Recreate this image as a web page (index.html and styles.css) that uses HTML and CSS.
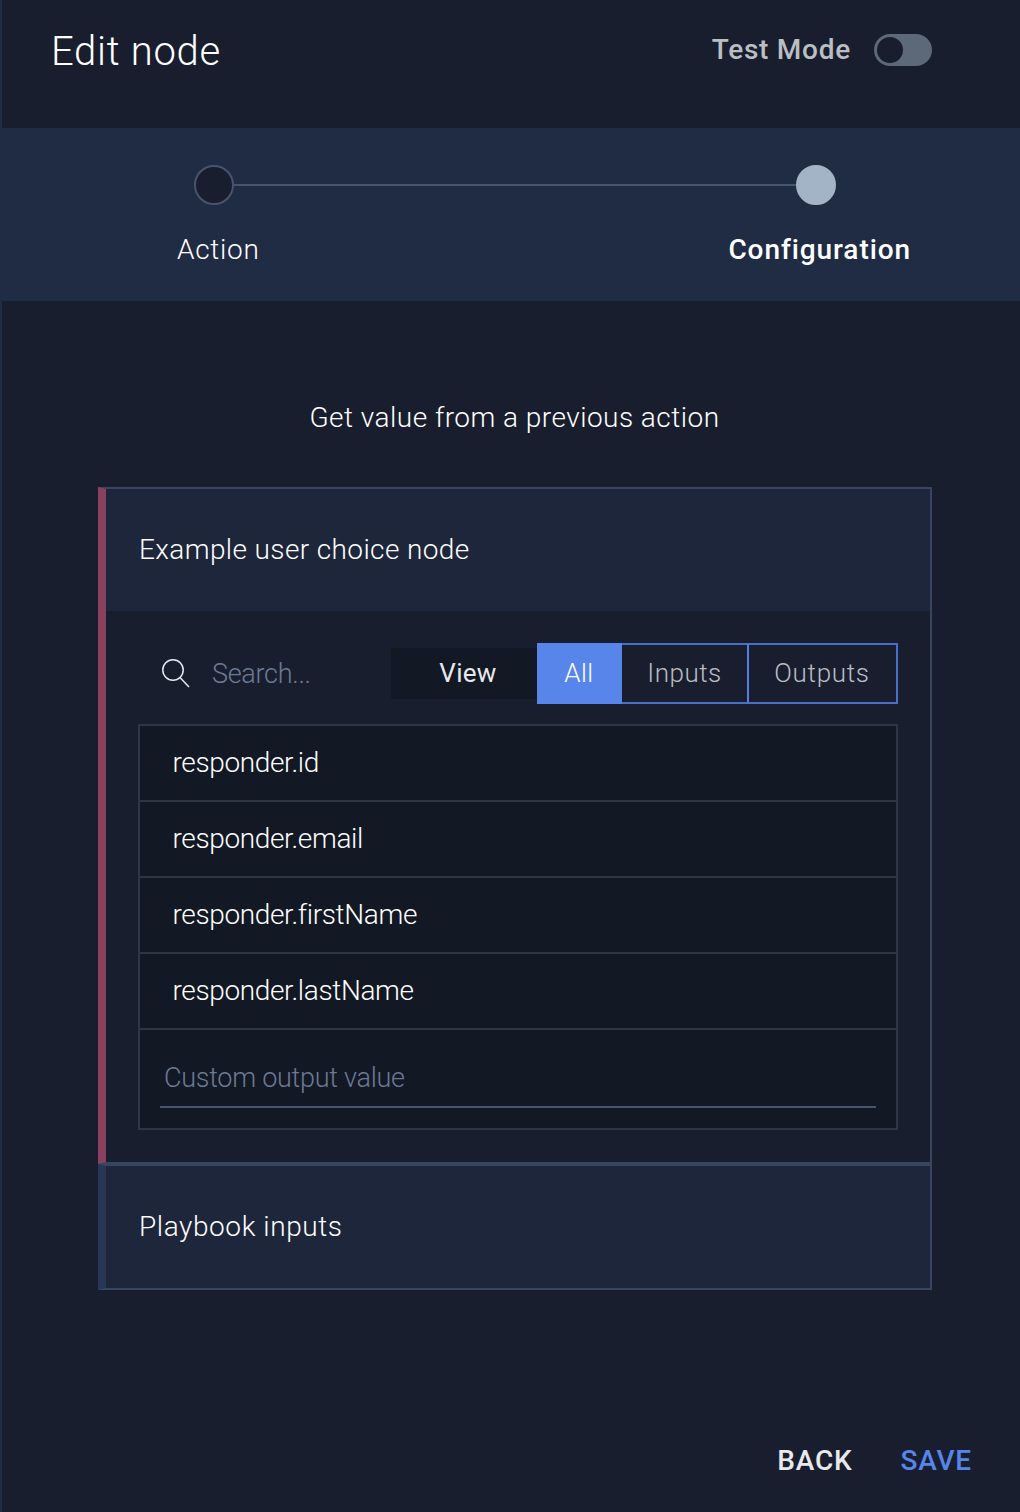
FILE: index.html
```
<!DOCTYPE html>
<html lang="en">
<head>
  <title>Edit node</title>
  <meta charset="UTF-8">
  <link rel="stylesheet" href="styles.css">
</head>
<body>
<div class="editor">
  <header class="header">
    <h1>Edit node</h1>
    <div class="test-mode">
      <span>Test Mode</span>
      <div class="toggle"></div>
    </div>
  </header>

  <div class="stepper">
    <div class="track">
      <div class="dot"></div>
      <div class="line"></div>
      <div class="dot active"></div>
    </div>
    <div class="steps">
      <span>Action</span>
      <span class="current">Configuration</span>
    </div>
  </div>

  <h2>Get value from a previous action</h2>

  <div class="accordion">
    <section class="item open">
      <h3>Example user choice node</h3>
      <div class="content">
        <div class="toolbar">
          <svg class="search-icon" width="30" height="30" viewBox="0 0 30 30">
            <circle cx="12" cy="12" r="10.2"/>
            <path d="M19 19.5 L28 29"/>
          </svg>
          <span class="search">Search...</span>
          <div class="view">View</div>
          <div class="tabs">
            <div class="tab all">All</div>
            <div class="tab inputs">Inputs</div>
            <div class="tab outputs">Outputs</div>
          </div>
        </div>
        <ul class="values">
          <li>responder.id</li>
          <li>responder.email</li>
          <li>responder.firstName</li>
          <li>responder.lastName</li>
          <li class="custom"><div class="field">Custom output value</div></li>
        </ul>
      </div>
    </section>
    <section class="item">
      <h3 class="playbook">Playbook inputs</h3>
    </section>
  </div>

  <footer class="footer">
    <span class="back">BACK</span>
    <span class="save">SAVE</span>
  </footer>
</div>
</body>
</html>
```
FILE: styles.css
```
body {
  margin: 0;
  background: #191e2f;
  color: #fff;
  font-family: Roboto, "Liberation Sans", sans-serif;
  font-size: 28px;
  font-weight: 300;
}

h1, h2, h3, ul {
  margin: 0;
  padding: 0;
  font-weight: 300;
}

.editor {
  box-sizing: border-box;
  height: 1512px;
  border-left: 2px solid #202b44;
}

.header {
  display: flex;
  justify-content: space-between;
  box-sizing: border-box;
  height: 128px;
  padding: 25px 88px 0 49px;
}

h1 {
  font-size: 40px;
  line-height: 53px;
  letter-spacing: 0.7px;
}

.test-mode {
  display: flex;
  align-items: center;
  height: 50px;
  gap: 23px;
  color: #babfc4;
  font-weight: 500;
  letter-spacing: 0.75px;
}

.test-mode span {
  line-height: 32px;
}

.toggle {
  box-sizing: border-box;
  width: 58px;
  height: 32px;
  padding: 3px;
  border-radius: 16px;
  background: #5d6979;
}

.toggle:before {
  content: "";
  display: block;
  width: 26px;
  height: 26px;
  border-radius: 50%;
  background: #191e2f;
}

.stepper {
  box-sizing: border-box;
  height: 173px;
  padding-top: 37px;
  background: #202b44;
}

.track {
  display: flex;
  align-items: center;
  margin: 0 184px 0 192px;
}

.dot {
  box-sizing: border-box;
  width: 40px;
  height: 40px;
  border: 2px solid #475470;
  border-radius: 50%;
  background: #191e2f;
}

.dot.active {
  border-color: #a3b4c7;
  background: #a3b4c7;
}

.line {
  flex: 1;
  height: 2px;
  background: #475470;
}

.steps {
  display: flex;
  justify-content: space-between;
  padding: 25px 109px 0 175px;
  line-height: 40px;
  letter-spacing: 0.7px;
}

.current {
  font-weight: 500;
  letter-spacing: 0.92px;
}

h2 {
  padding: 97px 0 0 7px;
  font-size: 28px;
  line-height: 40px;
  letter-spacing: 0.47px;
  text-align: center;
}

.accordion {
  margin: 49px 88px 0 96px;
}

.item {
  border: 2px solid #39455f;
  border-left: 8px solid #283757;
}

.item.open {
  border-left-color: #8a415f;
}

h3 {
  padding-left: 33px;
  background: #1e263b;
  font-size: 28px;
  line-height: 122px;
  letter-spacing: 0.38px;
}

.playbook {
  letter-spacing: 0.58px;
}

.content {
  padding: 32px;
}

.toolbar {
  display: flex;
  align-items: center;
  height: 61px;
  font-size: 26px;
}

.search-icon {
  margin: 0 0 2px 23px;
  fill: none;
  stroke: #e8eaed;
  stroke-width: 1.5;
}

.search {
  flex: 1;
  margin-left: 21px;
  color: #6b7a94;
  font-size: 27px;
  letter-spacing: -0.3px;
}

.view {
  box-sizing: border-box;
  width: 146px;
  padding-left: 8px;
  background: #121824;
  line-height: 51px;
  text-align: center;
  color: #e7e9eb;
  font-weight: 400;
  letter-spacing: 0.3px;
}

.tabs {
  display: flex;
}

.tab {
  box-sizing: border-box;
  height: 61px;
  border: 2px solid #476fc6;
  border-left: 0;
  line-height: 57px;
  text-align: center;
  color: #b9bdc3;
  letter-spacing: 0.5px;
}

.all {
  width: 85px;
  padding-left: 1px;
  border-color: #5785ea;
  background: #5785ea;
  color: #fff;
}

.inputs {
  width: 127px;
  border-right-color: #5480e2;
}

.outputs {
  width: 149px;
  padding-right: 1px;
  letter-spacing: 0.7px;
}

.values {
  margin-top: 20px;
  border: 2px solid #303541;
  background: #121824;
  list-style: none;
}

.values li {
  padding-left: 32.5px;
  border-bottom: 2px solid #303541;
  line-height: 74px;
  letter-spacing: -0.36px;
}

.values .custom {
  padding: 20px;
  border-bottom: 0;
}

.field {
  padding-left: 4px;
  border-bottom: 2px solid #475470;
  font-size: 27px;
  line-height: 56px;
  color: #6b7a94;
  letter-spacing: -0.28px;
}

.footer {
  display: flex;
  justify-content: flex-end;
  gap: 48px;
  padding: 151px 48px 0 0;
  line-height: 40px;
  font-weight: 500;
  letter-spacing: 0.8px;
}

.back {
  color: #e8e9eb;
}

.save {
  color: #5785ea;
}
```
